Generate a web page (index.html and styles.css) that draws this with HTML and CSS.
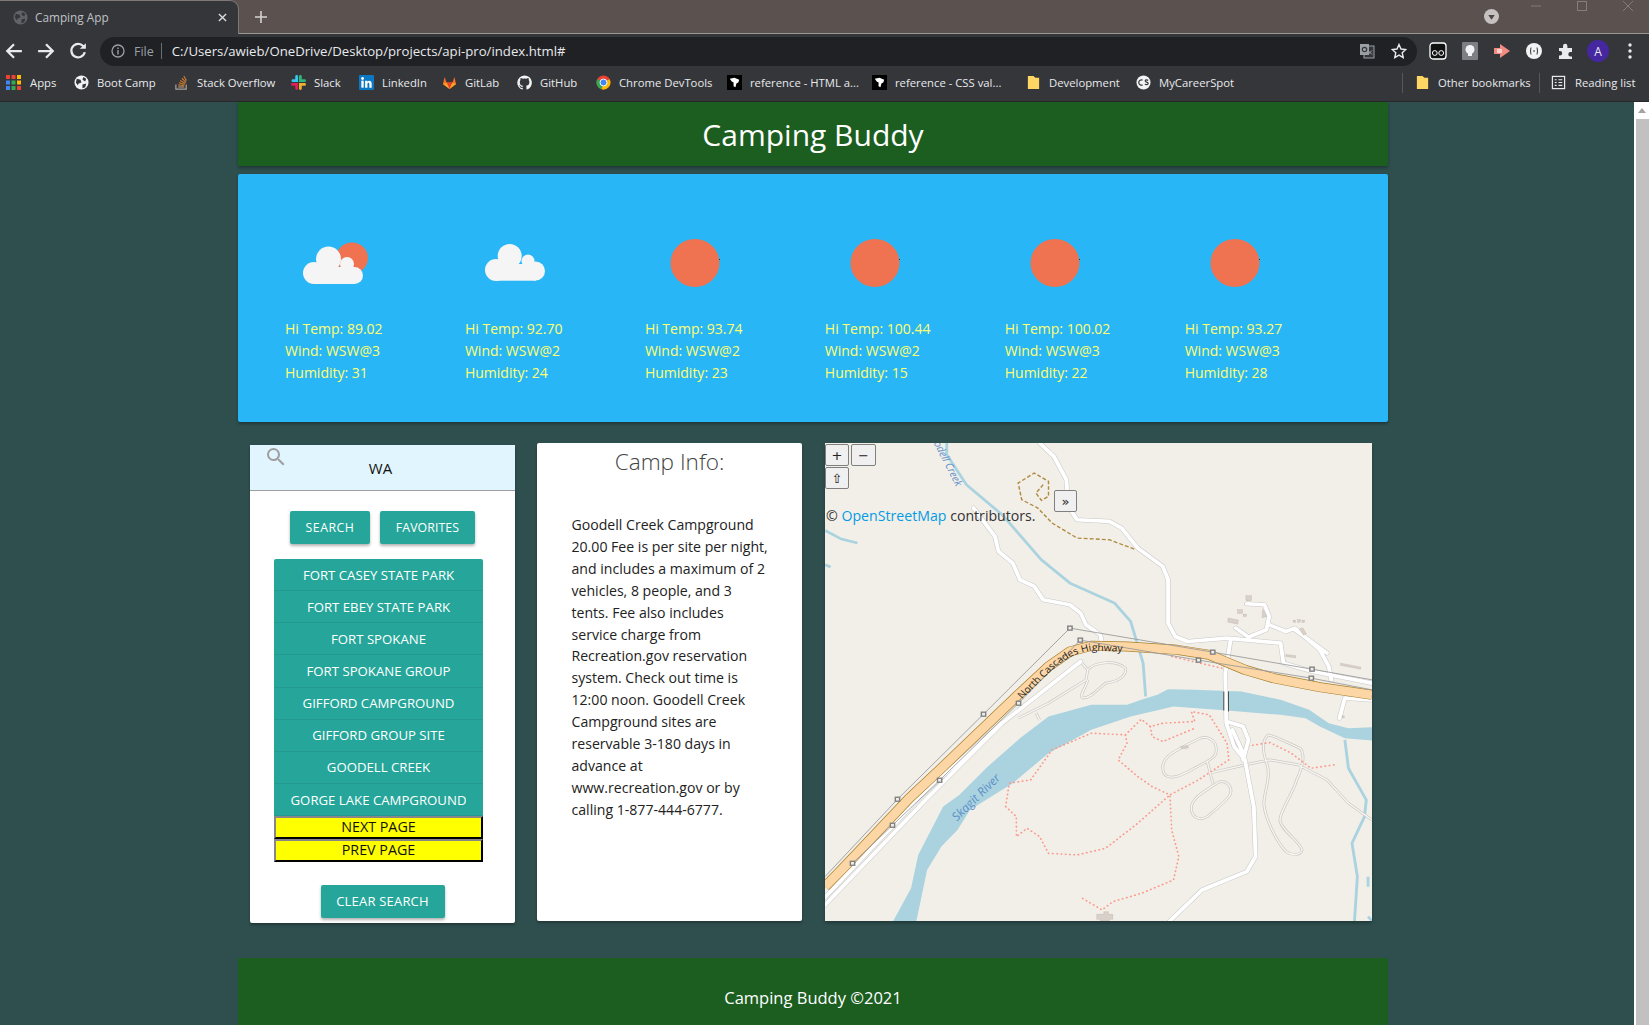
FILE: index.html
```html
<!DOCTYPE html>
<html lang="en">
<head>
<meta charset="utf-8">
<title>Camping App</title>
<link rel="stylesheet" href="styles.css">
</head>
<body>
<div class="chrome">
  <div class="tabstrip">
    <div class="tab">
      <svg class="tab-fav" viewBox="0 0 16 16"><circle cx="8" cy="8" r="7.5" fill="#5f6368"/><path d="M3 4l4 1 1 3-3 1-1 2-2-3zM10 2l3 2-1 3-3-2zM9 10l4-1-1 4-3 1z" fill="#35363a"/></svg>
      <span class="tab-title">Camping App</span>
      <svg class="tab-close" viewBox="0 0 10 10"><path d="M1 1l8 8M9 1l-8 8" stroke="#dadce0" stroke-width="1.5"/></svg>
    </div>
    <svg class="tab-new" viewBox="0 0 14 14"><path d="M7 1v12M1 7h12" stroke="#d5d2d1" stroke-width="1.6"/></svg>
    <svg class="tab-down" viewBox="0 0 14 14"><circle cx="7" cy="7" r="7" fill="#c4c1c0"/><path d="M4 5.5h6L7 10z" fill="#4d4543"/></svg>
    <svg class="cap cap-min" viewBox="0 0 12 12"><path d="M1 6h10" stroke="#857d7b"/></svg>
    <svg class="cap cap-max" viewBox="0 0 12 12"><rect x="1.5" y="1.5" width="9" height="9" fill="none" stroke="#857d7b"/></svg>
    <svg class="cap cap-close" viewBox="0 0 12 12"><path d="M1 1l10 10M11 1L1 11" stroke="#857d7b"/></svg>
  </div>
  <div class="toolbar">
    <svg class="nav" viewBox="0 0 16 16"><path d="M15 8H2M8 2L2 8l6 6" fill="none" stroke="#e8eaed" stroke-width="2"/></svg>
    <svg class="nav" viewBox="0 0 16 16"><path d="M1 8h13M8 2l6 6-6 6" fill="none" stroke="#e8eaed" stroke-width="2"/></svg>
    <svg class="nav" viewBox="0 0 16 16"><path d="M13.5 5A6 6 0 1 0 14 9" fill="none" stroke="#e8eaed" stroke-width="2"/><path d="M9.5 6H15V1z" fill="#e8eaed"/></svg>
    <div class="omnibox">
      <svg class="omni-info" viewBox="0 0 14 14"><circle cx="7" cy="7" r="6" fill="none" stroke="#9aa0a6" stroke-width="1.3"/><path d="M7 6v4.5M7 3.5v1.5" stroke="#9aa0a6" stroke-width="1.4"/></svg>
      <span class="omni-file">File</span>
      <span class="omni-sep"></span>
      <span class="omni-url">C:/Users/awieb/OneDrive/Desktop/projects/api-pro/index.html#</span>
      <svg class="omni-trans" viewBox="0 0 16 16"><rect x="5" y="3" width="10" height="12" fill="#35363a" stroke="#9aa0a6"/><rect x="1" y="1" width="9" height="11" fill="#9aa0a6"/><circle cx="5.5" cy="6.5" r="2.2" fill="none" stroke="#35363a" stroke-width="1.2"/><path d="M9 7.5l4 4M13 7.5l-4 4" stroke="#9aa0a6"/></svg>
      <svg class="omni-star" viewBox="0 0 16 16"><path d="M8 1.5l2 4.5 4.8.5-3.6 3.2 1 4.8L8 12.1l-4.2 2.4 1-4.8L1.200 6.500 6 6z" fill="none" stroke="#e8eaed" stroke-width="1.400"/></svg>
    </div>
    <div class="exts">
      <svg class="ext" viewBox="0 0 18 18"><rect x="1" y="1" width="16" height="16" rx="3" fill="#111" stroke="#fff" stroke-width="1.300"/><circle cx="5.800" cy="11" r="2.400" fill="none" stroke="#fff"/><circle cx="12.200" cy="11" r="2.400" fill="none" stroke="#fff"/></svg>
      <svg class="ext" viewBox="0 0 18 18"><rect x="1" y="0" width="16" height="18" rx="1" fill="#7c7f84"/><circle cx="9" cy="7.500" r="4.500" fill="#f1f3f4"/><rect x="7" y="11" width="4" height="3" fill="#f1f3f4"/></svg>
      <svg class="ext" viewBox="0 0 18 18"><path d="M1 6h6V2l10 7-10 7v-4H1z" fill="#f28b82"/><path d="M4 7h5v4H4z" fill="#fbd0cb"/></svg>
      <svg class="ext" viewBox="0 0 18 18"><circle cx="9" cy="9" r="8" fill="#f1f3f4"/><path d="M6 5.500Q5 9 6 12.500M12 5.500q1 3.500 0 7M8 9h2" stroke="#35363a" fill="none"/></svg>
      <svg class="ext" viewBox="0 0 18 18"><path d="M2 6h4V4a2.200 2.200 0 0 1 4.400 0v2h4.600v4h-1.500a2.200 2.200 0 0 0 0 4.400H15V17H2v-3.500h1a2.200 2.200 0 0 0 0-4.400H2z" fill="#e8eaed"/></svg>
      <span class="avatar">A</span>
      <svg class="ext" viewBox="0 0 18 18"><circle cx="9" cy="3" r="1.700" fill="#e8eaed"/><circle cx="9" cy="9" r="1.700" fill="#e8eaed"/><circle cx="9" cy="15" r="1.700" fill="#e8eaed"/></svg>
    </div>
  </div>
  <div class="bookmarks">
    <div class="bm-main">
      <a class="bm"><svg class="bm-ic" viewBox="0 0 15 15"><rect x="0" y="0" width="4" height="4" fill="#ea4335"/><rect x="5.500" y="0" width="4" height="4" fill="#ea4335"/><rect x="11" y="0" width="4" height="4" fill="#fbbc04"/><rect x="0" y="5.500" width="4" height="4" fill="#4285f4"/><rect x="5.500" y="5.500" width="4" height="4" fill="#34a853"/><rect x="11" y="5.500" width="4" height="4" fill="#fbbc04"/><rect x="0" y="11" width="4" height="4" fill="#4285f4"/><rect x="5.500" y="11" width="4" height="4" fill="#34a853"/><rect x="11" y="11" width="4" height="4" fill="#ea4335"/></svg>Apps</a>
      <a class="bm"><svg class="bm-ic" viewBox="0 0 16 16"><circle cx="8" cy="8" r="7.500" fill="#f1f3f4"/><path d="M3 4l4 1 1 3-3 1-1 2-2-3zM10 2l3 2-1 3-3-2zM9 10l4-1-1 4-3 1z" fill="#35363a"/></svg>Boot Camp</a>
      <a class="bm"><svg class="bm-ic" viewBox="0 0 16 16"><path d="M2 10v5h11v-5" fill="none" stroke="#a8a29e" stroke-width="1.300"/><path d="M4.500 12.800h6.500" stroke="#b08f72" stroke-width="1.300"/><path d="M4.600 10.500l6.400 1M5.200 8.300l6.200 1.700M6.500 5.800l5.600 3M8.500 3.500l4.500 4.300M10.500 1l2.800 5" stroke="#c77a30" stroke-width="1.200"/></svg>Stack Overflow</a>
      <a class="bm"><svg class="bm-ic" viewBox="0 0 16 16"><path d="M6 1.500v4.500H2" stroke="#36c5f0" stroke-width="3" fill="none" stroke-linecap="round"/><path d="M14.500 6H10V1.500" stroke="#2eb67d" stroke-width="3" fill="none" stroke-linecap="round"/><path d="M10 14.500V10h4.500" stroke="#ecb22e" stroke-width="3" fill="none" stroke-linecap="round"/><path d="M1.500 10H6v4.500" stroke="#e01e5a" stroke-width="3" fill="none" stroke-linecap="round"/></svg>Slack</a>
      <a class="bm"><svg class="bm-ic" viewBox="0 0 16 16"><rect width="16" height="16" rx="1" fill="#0a78c2"/><rect x="2.500" y="6" width="2.500" height="7.500" fill="#fff"/><circle cx="3.800" cy="3.700" r="1.500" fill="#fff"/><path d="M6.500 6H9v1.200C10 5.500 13.500 5.500 13.500 9v4.500H11V9.500c0-1.800-2-1.800-2 0v4H6.500z" fill="#fff"/></svg>LinkedIn</a>
      <a class="bm"><svg class="bm-ic" viewBox="0 0 16 16"><path d="M8 15L1 9.500 2.800 2l2 6h6.400l2-6L15 9.500z" fill="#fc6d26"/><path d="M8 15L4.800 8h6.400z" fill="#e24329"/><path d="M1 9.500L4.800 8 8 15zM15 9.500L11.200 8 8 15z" fill="#fca326"/></svg>GitLab</a>
      <a class="bm"><svg class="bm-ic" viewBox="0 0 16 16"><path d="M8 .5a7.700 7.700 0 0 0-2.400 15c.4.100.5-.2.500-.4v-1.400c-2.200.5-2.700-1-2.700-1-.4-.9-.9-1.200-.9-1.200-.7-.5.100-.5.100-.5.800.100 1.200.8 1.200.8.700 1.200 1.900.9 2.300.7.100-.5.300-.9.500-1.100-1.800-.2-3.600-.9-3.600-4 0-.9.300-1.600.8-2.100-.1-.2-.4-1 .1-2.100 0 0 .7-.2 2.200.8a7.500 7.500 0 0 1 4 0c1.500-1 2.200-.8 2.200-.8.400 1.100.2 1.900.1 2.100.5.500.8 1.200.8 2.100 0 3.100-1.900 3.800-3.700 4 .3.300.6.800.6 1.500v2.200c0 .2.100.5.500.4A7.700 7.700 0 0 0 8 .5z" fill="#f1f3f4"/></svg>GitHub</a>
      <a class="bm"><svg class="bm-ic" viewBox="0 0 16 16"><circle cx="8" cy="8" r="7.500" fill="#ea4335"/><path d="M8 8L1.500 4.300A7.500 7.500 0 0 0 6 15.200z" fill="#34a853"/><path d="M8 8l-2 7.200A7.500 7.500 0 0 0 14.500 4.500z" fill="#fbbc04"/><circle cx="8" cy="8" r="3.700" fill="#4285f4" stroke="#fff"/></svg>Chrome DevTools</a>
      <a class="bm"><svg class="bm-ic" viewBox="0 0 16 16"><rect width="16" height="16" fill="#000"/><path d="M3 4l5-1 5 2-1 3-2 1-1 4-2-1V8L5 7z" fill="#fff"/></svg>reference - HTML a...</a>
      <a class="bm"><svg class="bm-ic" viewBox="0 0 16 16"><rect width="16" height="16" fill="#000"/><path d="M3 4l5-1 5 2-1 3-2 1-1 4-2-1V8L5 7z" fill="#fff"/></svg>reference - CSS val...</a>
      <a class="bm"><svg class="bm-ic" viewBox="0 0 16 16"><path d="M2 1h6l2 2h4v12H2z" fill="#fdd663"/></svg>Development</a>
      <a class="bm"><svg class="bm-ic" viewBox="0 0 16 16"><circle cx="8" cy="8" r="7.500" fill="#f1f3f4"/><path d="M7 5.500A2.800 2.800 0 1 0 7 10.500M13 5.800c-1.500-1.200-3.500-.6-3 .8.500 1.200 3.300 1 3 2.600-.3 1.500-2.500 1.300-3.500.4" fill="none" stroke="#35363a" stroke-width="1.300"/></svg>MyCareerSpot</a>
    </div>
    <span class="bm-sep"></span>
    <a class="bm bm-other"><svg class="bm-ic" viewBox="0 0 16 16"><path d="M2 1h6l2 2h4v12H2z" fill="#fdd663"/></svg>Other bookmarks</a>
    <span class="bm-sep"></span>
    <a class="bm bm-read"><svg class="bm-ic" viewBox="0 0 16 16"><rect x="1.500" y="1.500" width="13" height="13" fill="none" stroke="#e8eaed" stroke-width="1.300"/><path d="M4 5h2M8 5h4M4 8h2M8 8h4M4 11h2M8 11h4" stroke="#e8eaed" stroke-width="1.200"/></svg>Reading list</a>
  </div>
</div>

<div class="viewport">
  <div class="page">
    <header class="site-header"><h1>Camping Buddy</h1></header>

    <section class="weather">
      <div class="wx">
        <svg class="wx-icon" viewBox="0 0 100 100"><ellipse cx="67" cy="45" rx="16" ry="15.500" fill="#ef7350"/><g fill="#f5f5f5"><circle cx="43.500" cy="46" r="12.500"/><circle cx="62" cy="51" r="7"/><circle cx="29" cy="60" r="11"/><circle cx="69.500" cy="62.500" r="8.500"/><rect x="29" y="54" width="41" height="17"/></g></svg>
        <p>Hi Temp: 89.02</p><p>Wind: WSW@3</p><p>Humidity: 31</p>
      </div>
      <div class="wx">
        <svg class="wx-icon" viewBox="0 0 100 100"><g fill="#f5f5f5"><circle cx="44.700" cy="43" r="12"/><circle cx="63" cy="48" r="6.500"/><circle cx="31" cy="57" r="11"/><circle cx="70.500" cy="58" r="9.500"/><rect x="31" y="51" width="40" height="16.700"/></g></svg>
        <p>Hi Temp: 92.70</p><p>Wind: WSW@2</p><p>Humidity: 24</p>
      </div>
      <div class="wx">
        <svg class="wx-icon" viewBox="0 0 100 100"><ellipse cx="50" cy="50" rx="24.500" ry="24" fill="#ef7350"/><rect x="74" y="46" width="1" height="1" fill="#333"/></svg>
        <p>Hi Temp: 93.74</p><p>Wind: WSW@2</p><p>Humidity: 23</p>
      </div>
      <div class="wx">
        <svg class="wx-icon" viewBox="0 0 100 100"><ellipse cx="50" cy="50" rx="24.500" ry="24" fill="#ef7350"/><rect x="74" y="46" width="1" height="1" fill="#333"/></svg>
        <p>Hi Temp: 100.44</p><p>Wind: WSW@2</p><p>Humidity: 15</p>
      </div>
      <div class="wx">
        <svg class="wx-icon" viewBox="0 0 100 100"><ellipse cx="50" cy="50" rx="24.500" ry="24" fill="#ef7350"/><rect x="74" y="46" width="1" height="1" fill="#333"/></svg>
        <p>Hi Temp: 100.02</p><p>Wind: WSW@3</p><p>Humidity: 22</p>
      </div>
      <div class="wx">
        <svg class="wx-icon" viewBox="0 0 100 100"><ellipse cx="50" cy="50" rx="24.500" ry="24" fill="#ef7350"/><rect x="74" y="46" width="1" height="1" fill="#333"/></svg>
        <p>Hi Temp: 93.27</p><p>Wind: WSW@3</p><p>Humidity: 28</p>
      </div>
    </section>

    <main class="content">
      <aside class="panel">
        <div class="search-field">
          <svg class="search-icon" viewBox="0 0 24 24"><path d="M15.500 14h-.79l-.28-.27A6.470 6.470 0 0 0 16 9.500 6.500 6.500 0 1 0 9.500 16c1.610 0 3.090-.59 4.230-1.570l.27.28v.79l5 4.990L20.490 19l-4.990-5zm-6 0C7.010 14 5 11.990 5 9.500S7.010 5 9.500 5 14 7.010 14 9.500 11.990 14 9.500 14z" fill="#9e9e9e"/></svg>
          <input class="search-input" type="text" value="WA">
        </div>
        <div class="btn-row">
          <button class="btn btn-search">Search</button>
          <button class="btn btn-fav">Favorites</button>
        </div>
        <div class="camp-list">
          <button class="camp">Fort Casey State Park</button>
          <button class="camp">Fort Ebey State Park</button>
          <button class="camp">Fort Spokane</button>
          <button class="camp">Fort Spokane Group</button>
          <button class="camp">Gifford Campground</button>
          <button class="camp">Gifford Group Site</button>
          <button class="camp">Goodell Creek</button>
          <button class="camp"><span class="camp-clip">Gorge Lake Campground</span></button>
          <button class="pager">Next Page</button>
          <button class="pager">Prev Page</button>
        </div>
        <button class="btn btn-clear">Clear Search</button>
      </aside>

      <article class="info">
        <h2>Camp Info:</h2>
        <p>Goodell Creek Campground<br>20.00 Fee is per site per night,<br>and includes a maximum of 2<br>vehicles, 8 people, and 3<br>tents. Fee also includes<br>service charge from<br>Recreation.gov reservation<br>system. Check out time is<br>12:00 noon. Goodell Creek<br>Campground sites are<br>reservable 3-180 days in<br>advance at<br>www.recreation.gov or by<br>calling 1-877-444-6777.</p>
      </article>

      <div class="map">
        <svg class="map-svg" viewBox="14 10 1532 1433" preserveAspectRatio="none">
          <defs>
            <path id="lbl-hwy" d="M566 778L645 695Q700 640 760 632L850 636"/>
            <path id="lbl-skagit" d="M384 1145L516 1007"/>
            <path id="lbl-creek" d="M318 10L385 150"/>
          </defs>
          <path class="m-water" d="M205 1443L255 1345 275 1245 345 1100 390 1065 470 980 560 895 640 830 760 795 860 795 900 780 945 765 975 748 1050 750 1180 755 1290 780 1370 810 1425 850 1480 865 1546 862V902L1470 895 1400 860 1360 835 1290 825 1140 812 990 800 870 830 760 870 640 940 540 1030 480 1070 420 1110 385 1170 340 1220 300 1290 270 1443z"/>
          <path class="m-stream" d="M355 10V45L410 135 510 225 620 360 700 430 825 490 870 545 905 670 912 770"/>
          <path class="m-stream" d="M14 272L60 298 105 310M14 375L30 382M1470 900L1480 985 1530 1080 1525 1130 1490 1210 1505 1310 1497 1443M1535 1340V1310M1535 1430L1546 1443"/>

          <path class="m-minor" d="M730 665L750 690 745 720 640 790 555 835M605 820L615 840M750 690C770 665 830 660 855 685C860 705 840 725 800 730C780 745 760 775 735 775C725 765 745 745 750 720M960 985C958 950 990 935 1060 897C1085 885 1110 900 1110 930C1110 955 1090 960 1040 990C1000 1015 962 1025 960 985zM1085 965L1100 1030M1040 1105C1040 1075 1070 1060 1115 1027C1135 1020 1155 1035 1150 1060C1145 1080 1100 1115 1085 1130C1060 1145 1040 1130 1040 1105zM1090 1000L1190 975 1260 960 1340 975 1420 1020 1480 1090 1546 1140M1250 965C1240 935 1235 905 1255 885C1280 890 1320 915 1345 925C1360 945 1350 985 1335 1020C1325 1060 1290 1110 1288 1140C1290 1170 1345 1205 1350 1230C1345 1250 1320 1245 1305 1235C1275 1200 1245 1130 1243 1090C1245 1050 1265 1010 1250 965z"/>
          <path class="m-minor-in" d="M730 665L750 690 745 720 640 790 555 835M605 820L615 840M750 690C770 665 830 660 855 685C860 705 840 725 800 730C780 745 760 775 735 775C725 765 745 745 750 720M960 985C958 950 990 935 1060 897C1085 885 1110 900 1110 930C1110 955 1090 960 1040 990C1000 1015 962 1025 960 985zM1085 965L1100 1030M1040 1105C1040 1075 1070 1060 1115 1027C1135 1020 1155 1035 1150 1060C1145 1080 1100 1115 1085 1130C1060 1145 1040 1130 1040 1105zM1090 1000L1190 975 1260 960 1340 975 1420 1020 1480 1090 1546 1140M1250 965C1240 935 1235 905 1255 885C1280 890 1320 915 1345 925C1360 945 1350 985 1335 1020C1325 1060 1290 1110 1288 1140C1290 1170 1345 1205 1350 1230C1345 1250 1320 1245 1305 1235C1275 1200 1245 1130 1243 1090C1245 1050 1265 1010 1250 965z"/>

          <path class="m-dots" d="M985 650L1125 685M520 1100L530 1030 590 1020 650 930 760 880 855 885 900 838 925 860 960 850 1050 845 1040 815 1090 825 1140 910 1145 960 1060 1020 980 1065 930 1040 890 1010 835 960 860 910 855 885M925 860L930 890 960 905 1050 865M520 1100L550 1130 550 1190 580 1165 615 1190 640 1240 720 1245 800 1225 890 1150 980 1065 985 1170 1005 1250 990 1320 900 1360 820 1385 790 1410 735 1375M1200 918L1260 908 1320 940 1375 985 1440 975"/>
          <path class="m-track" d="M880 328L810 300 720 295 650 250 610 205 565 180 555 130 600 100 640 125 640 170 620 182 605 160 625 135"/>

          <path class="m-case" d="M14 1395L300 1075 510 850 730 665M14 1372L290 1060 510 848M615 10L655 50 690 120 695 200 720 240 810 245 845 265 890 325 960 380 975 420 975 550 995 590 1030 605 1140 595 1290 610 1298 670 1380 695 1546 730M430 205L490 290 500 335 540 370 560 420 600 440 625 480 700 495 730 520 745 555 785 585 790 610M1165 565L1200 592 1250 570 1258 530 1245 495 1195 492M1258 555L1305 575 1330 565 1400 630 1425 680 1432 720M1330 570L1420 640M1150 600L1135 700 1138 850 1160 920 1190 960 1215 1100 1220 1250 1195 1295 1070 1350 980 1443M1140 845L1185 860 1200 900 1185 960M1155 870L1185 940M1455 835L1470 775 1546 780"/>
          <path class="m-road" d="M14 1395L300 1075 510 850 730 665M14 1372L290 1060 510 848M615 10L655 50 690 120 695 200 720 240 810 245 845 265 890 325 960 380 975 420 975 550 995 590 1030 605 1140 595 1290 610 1298 670 1380 695 1546 730M430 205L490 290 500 335 540 370 560 420 600 440 625 480 700 495 730 520 745 555 785 585 790 610M1165 565L1200 592 1250 570 1258 530 1245 495 1195 492M1258 555L1305 575 1330 565 1400 630 1425 680 1432 720M1330 570L1420 640M1150 600L1135 700 1138 850 1160 920 1190 960 1215 1100 1220 1250 1195 1295 1070 1350 980 1443M1140 845L1185 860 1200 900 1185 960M1155 870L1185 940M1455 835L1470 775 1546 780"/>
          <path class="m-bridge" d="M1131 755V812M1144 755V815"/>

          <path class="m-hwy-case" d="M14 1340L60 1290 250 1075 330 995 555 765 640 680 700 635 760 618 860 620 1000 630 1090 645 1190 690 1270 715 1400 742 1546 765"/>
          <path class="m-hwy" d="M14 1340L60 1290 250 1075 330 995 555 765 640 680 700 635 760 618 860 620 1000 630 1090 645 1190 690 1270 715 1400 742 1546 765"/>

          <path class="m-power" d="M14 1310L217 1078 458 823 700 565 1100 637 1378 688 1546 720M91 1270L203 1156 335 1021 556 790 729 601 1060 661 1376 715 1546 750"/>
          <g class="m-pole">
            <rect x="211" y="1072" width="12" height="12"/><rect x="452" y="817" width="12" height="12"/><rect x="694" y="559" width="12" height="12"/><rect x="1094" y="631" width="12" height="12"/><rect x="1372" y="682" width="12" height="12"/><rect x="85" y="1264" width="12" height="12"/><rect x="197" y="1150" width="12" height="12"/><rect x="329" y="1015" width="12" height="12"/><rect x="550" y="784" width="12" height="12"/><rect x="723" y="595" width="12" height="12"/><rect x="1054" y="655" width="12" height="12"/><rect x="1370" y="709" width="12" height="12"/>
          </g>

          <g class="m-bld">
            <rect x="1193" y="468" width="15" height="15"/><rect x="1170" y="510" width="13" height="11"/><rect x="1185" y="523" width="9" height="7"/><path d="M1143 535L1172 541 1170 553 1142 547z"/><path d="M1240 508L1252 530 1238 534z"/><rect x="1325" y="541" width="7" height="7"/><rect x="1338" y="540" width="7" height="7"/><rect x="1350" y="541" width="7" height="7"/><path d="M1342 568L1352 564 1362 582 1354 586z"/><path d="M1305 644L1333 648 1332 654 1304 650z"/><path d="M1458 670L1515 682 1514 688 1457 676z"/><path d="M1010 920L1030 917 1032 924 1012 927z"/><path d="M775 1423H795V1415H808V1423H820V1438H810V1443H785V1438H775z"/><rect x="1462" y="828" width="6" height="6"/>
          </g>

          <text class="m-label m-label-water"><textPath href="#lbl-creek">odell Creek</textPath></text>
          <text class="m-label m-label-skagit"><textPath href="#lbl-skagit">Skagit River</textPath></text>
          <text class="m-label m-label-road"><textPath href="#lbl-hwy">North Cascades Highway</textPath></text>
        </svg>
        <button class="ctl ctl-plus">+</button>
        <button class="ctl ctl-minus">−</button>
        <button class="ctl ctl-home">⇧</button>
        <button class="ctl ctl-more">»</button>
        <div class="attrib">© <a class="attrib-link">OpenStreetMap</a> contributors.</div>
      </div>
    </main>

    <footer class="site-footer">Camping Buddy ©2021</footer>
  </div>
  <div class="scrollbar"><div class="sb-up"><svg class="sb-arrow" viewBox="0 0 8 5"><path d="M0 5L4 0l4 5z" fill="#a3a3a3"/></svg></div><div class="sb-thumb"></div></div>
</div>
</body>
</html>
```

FILE: styles.css
```css
* { box-sizing: border-box; }
html, body { margin: 0; padding: 0; height: 1025px; overflow: hidden; }
body { display: flex; flex-direction: column; background: #2f4f4f; font-family: "Open Sans", "Noto Sans", sans-serif; color: #222; }

/* browser chrome */
.chrome { flex: 0 0 102px; background: #35363a; border-bottom: 1px solid #27282b; display: flex; flex-direction: column; }
.tabstrip { height: 34px; background: #5b514f; border-bottom: 1px solid #9b9593; display: flex; align-items: center; }
.tab { width: 239px; height: 34px; background: #35363a; border: 1px solid #7f7876; border-bottom: 0; border-left: 0; border-radius: 0 9px 0 0; display: flex; align-items: center; }
.tab-fav { width: 15px; height: 15px; margin-left: 13px; }
.tab-title { margin-left: 7px; font-size: 11.800px; color: #bfc2c6; }
.tab-close { width: 9px; height: 9px; margin-left: auto; margin-right: 11px; }
.tab-new { width: 14px; height: 14px; margin-left: 15px; }
.tab-down { width: 15px; height: 15px; margin-left: 1216px; }
.cap { width: 12px; height: 12px; align-self: flex-start; }
.cap-min { margin-left: 31px; }
.cap-max { margin-left: 34px; }
.cap-close { margin-left: 34px; }

.toolbar { height: 34px; display: flex; align-items: center; padding-left: 5px; gap: 14px; }
.nav { width: 18px; height: 18px; flex: none; }
.omnibox { width: 1317px; height: 29px; margin-left: -1px; background: #202124; border-radius: 15px; display: flex; align-items: center; padding: 0 10px 0 11px; font-size: 13px; }
.omni-info { width: 14px; height: 14px; }
.omni-file { margin-left: 9px; color: #9aa0a6; font-size: 12.500px; }
.omni-sep { width: 1px; height: 16px; background: #6b6e72; margin-left: 7px; }
.omni-url { margin-left: 10px; color: #e8eaed; font-size: 13.200px; }
.omni-trans { width: 16px; height: 16px; margin-left: auto; }
.omni-star { width: 16px; height: 16px; margin-left: 16px; }
.exts { display: flex; align-items: center; gap: 14px; margin-left: -2px; }
.ext { width: 18px; height: 18px; }
.avatar { width: 22px; height: 22px; margin: 0 -2px; border-radius: 50%; background: #4527a0; color: #e8e6f5; font-size: 12px; display: flex; align-items: center; justify-content: center; }

.bookmarks { height: 33px; padding-bottom: 4px; display: flex; align-items: center; font-size: 11.300px; color: #e8eaed; }
.bm-main { display: grid; grid-template-columns: 68px 100px 117px 68px 83px 75px 79px 131px 145px 154px 110px 130px; width: 1402px; padding-left: 6px; }
.bm { display: flex; align-items: center; gap: 8px; white-space: nowrap; }
.bm:first-child { gap: 9px; }
.bm-ic { width: 15px; height: 15px; flex: none; }
.bm-sep { width: 1px; height: 20px; background: #55575b; }
.bm-other { margin-left: 12px; width: 124px; }
.bm-read { margin-left: 11px; gap: 9px; }

/* page */
.viewport { flex: 1; display: flex; min-height: 0; }
.page { flex: 0 0 1634px; padding-left: 238px; padding-right: 246px; }
.scrollbar { flex: 0 0 15px; background: #fff; }
.sb-up { height: 17px; display: flex; justify-content: flex-end; padding: 6px 3px 0 0; background: #fff; }
.sb-arrow { width: 8px; height: 5px; }
.sb-thumb { margin-left: 2px; height: 906px; background: #c1c1c1; }

.site-header { height: 64px; padding-top: 1px; background: #1b5e20; box-shadow: 0 2px 3px rgba(0,0,0,.3); display: flex; align-items: center; justify-content: center; }
.site-header h1 { margin: 0; font-size: 30px; font-weight: 400; color: #fff; }

.weather { height: 248px; margin-top: 8px; padding: 39px 0 0 47px; background: #29b6f6; border-radius: 2px; box-shadow: 0 2px 3px rgba(0,0,0,.3); display: flex; }
.wx { flex: 0 0 179.950px; }
.wx-icon { display: block; width: 100px; height: 100px; margin-bottom: 5px; }
.wx p { margin: 0; height: 22px; line-height: 22px; font-size: 14px; color: #ffff72; white-space: nowrap; }

.content { display: flex; align-items: flex-start; margin-top: 21px; padding-left: 12px; gap: 22px; }

.panel { width: 265px; height: 478px; margin-top: 2px; background: #fff; border-radius: 2px; box-shadow: 0 2px 3px rgba(0,0,0,.3); display: flex; flex-direction: column; align-items: center; }
.search-field { position: relative; width: 100%; height: 46px; flex: none; }
.search-input { width: 100%; height: 46px; padding: 0 4px 0 0; border: 0; border-bottom: 1px solid #9e9e9e; background: #e1f5fe; font: 15px "Open Sans", sans-serif; color: #111; text-align: center; outline: 0; }
.search-icon { position: absolute; left: 14px; top: 0; width: 24px; height: 24px; }
.btn { height: 33px; padding: 0; border: 0; border-radius: 2px; background: #26a69a; color: #fff; font: 12.300px "Open Sans", sans-serif; letter-spacing: .5px; text-transform: uppercase; box-shadow: 0 2px 3px rgba(0,0,0,.3); }
.btn-row { display: flex; gap: 10px; margin-top: 20px; }
.btn-search { width: 80px; }
.btn-fav { width: 95px; letter-spacing: .1px; }
.btn-clear { width: 124px; margin-top: 23px; padding-bottom: 2px; font-size: 13px; letter-spacing: .2px; }
.camp-list { width: 209px; margin-top: 15px; margin-right: 8px; display: flex; flex-direction: column; }
.camp { height: 32.125px; padding: 0; border: 0; border-bottom: 1px solid #239a8f; background: #26a69a; color: #fff; font: 13.200px "Open Sans", sans-serif; text-transform: uppercase; white-space: nowrap; position: relative; }
.camp:first-child { border-radius: 2px 2px 0 0; }
.camp-clip { display: inline-block; height: 9px; line-height: 9px; overflow: hidden; vertical-align: middle; }
.pager { height: 23px; padding: 0; border: 2px outset #333; background: #ff0; color: #111; font: 14.300px/1 "Open Sans", sans-serif; text-transform: uppercase; }

.info { width: 265px; height: 478px; background: #fff; border-radius: 2px; box-shadow: 0 2px 3px rgba(0,0,0,.3); }
.info h2 { margin: 0; height: 38px; line-height: 38px; text-align: center; font-size: 22.600px; font-weight: 300; color: #444; }
.info p { margin: 33px 0 0 34.500px; font-size: 14.100px; line-height: 21.900px; color: #222; white-space: nowrap; }

.map { position: relative; width: 547px; height: 478px; margin-left: 1px; background: #f2efe9; overflow: hidden; box-shadow: 0 2px 3px rgba(0,0,0,.3); }
.map-svg { display: block; width: 547px; height: 478px; }
.m-water { fill: #aad3df; }
.m-stream { fill: none; stroke: #aad3df; stroke-width: 8; }
.m-minor { fill: none; stroke: #cbc8c4; stroke-width: 8; stroke-linejoin: round; }
.m-minor-in { fill: none; stroke: #f7f5f1; stroke-width: 4; stroke-linejoin: round; }
.m-dots { fill: none; stroke: #fb9a8c; stroke-width: 5; stroke-dasharray: 1 11; stroke-linecap: round; }
.m-track { fill: none; stroke: #b08a3e; stroke-width: 4; stroke-dasharray: 11 6; }
.m-case { fill: none; stroke: #c8c8c8; stroke-width: 14; stroke-linejoin: round; stroke-linecap: round; }
.m-road { fill: none; stroke: #fff; stroke-width: 11; stroke-linejoin: round; stroke-linecap: round; }
.m-bridge { fill: none; stroke: #333; stroke-width: 2.500; }
.m-hwy-case { fill: none; stroke: #a8802e; stroke-width: 30; stroke-linejoin: round; }
.m-hwy { fill: none; stroke: #fcd6a4; stroke-width: 26; stroke-linejoin: round; }
.m-power { fill: none; stroke: #999; stroke-width: 2.500; }
.m-pole rect { fill: #f2efe9; stroke: #808080; stroke-width: 4; }
.m-bld path, .m-bld rect { fill: #d9d0c9; stroke: #b8aca3; stroke-width: 1; }
.m-label { font-family: "Open Sans", sans-serif; font-size: 30px; }
.m-label-water { fill: #5f8fc9; font-style: italic; }
.m-label-skagit { fill: #5f8fc9; font-style: italic; font-size: 35px; }
.m-label-road { fill: #222; font-size: 29px; }

.ctl { position: absolute; width: 24px; height: 22px; padding: 0; border: 1px solid #808080; border-radius: 2px; background: #f0f0f0; color: #222; font: 13px/1 "DejaVu Sans", sans-serif; }
.ctl-plus { left: 0; top: 1px; }
.ctl-minus { left: 26px; top: 1px; width: 25px; }
.ctl-home { left: 0; top: 24px; height: 22px; }
.ctl-more { left: 229px; top: 47px; width: 23px; font-size: 13px; }
.attrib { position: absolute; left: 1px; top: 62px; font-size: 14.150px; line-height: 22px; color: #333; white-space: nowrap; }
.attrib-link { color: #039be5; }

.site-footer { margin-top: 35px; height: 100px; padding-top: 29px; background: #1b5e20; color: #fff; font-size: 16.500px; line-height: 22px; text-align: center; }
```
